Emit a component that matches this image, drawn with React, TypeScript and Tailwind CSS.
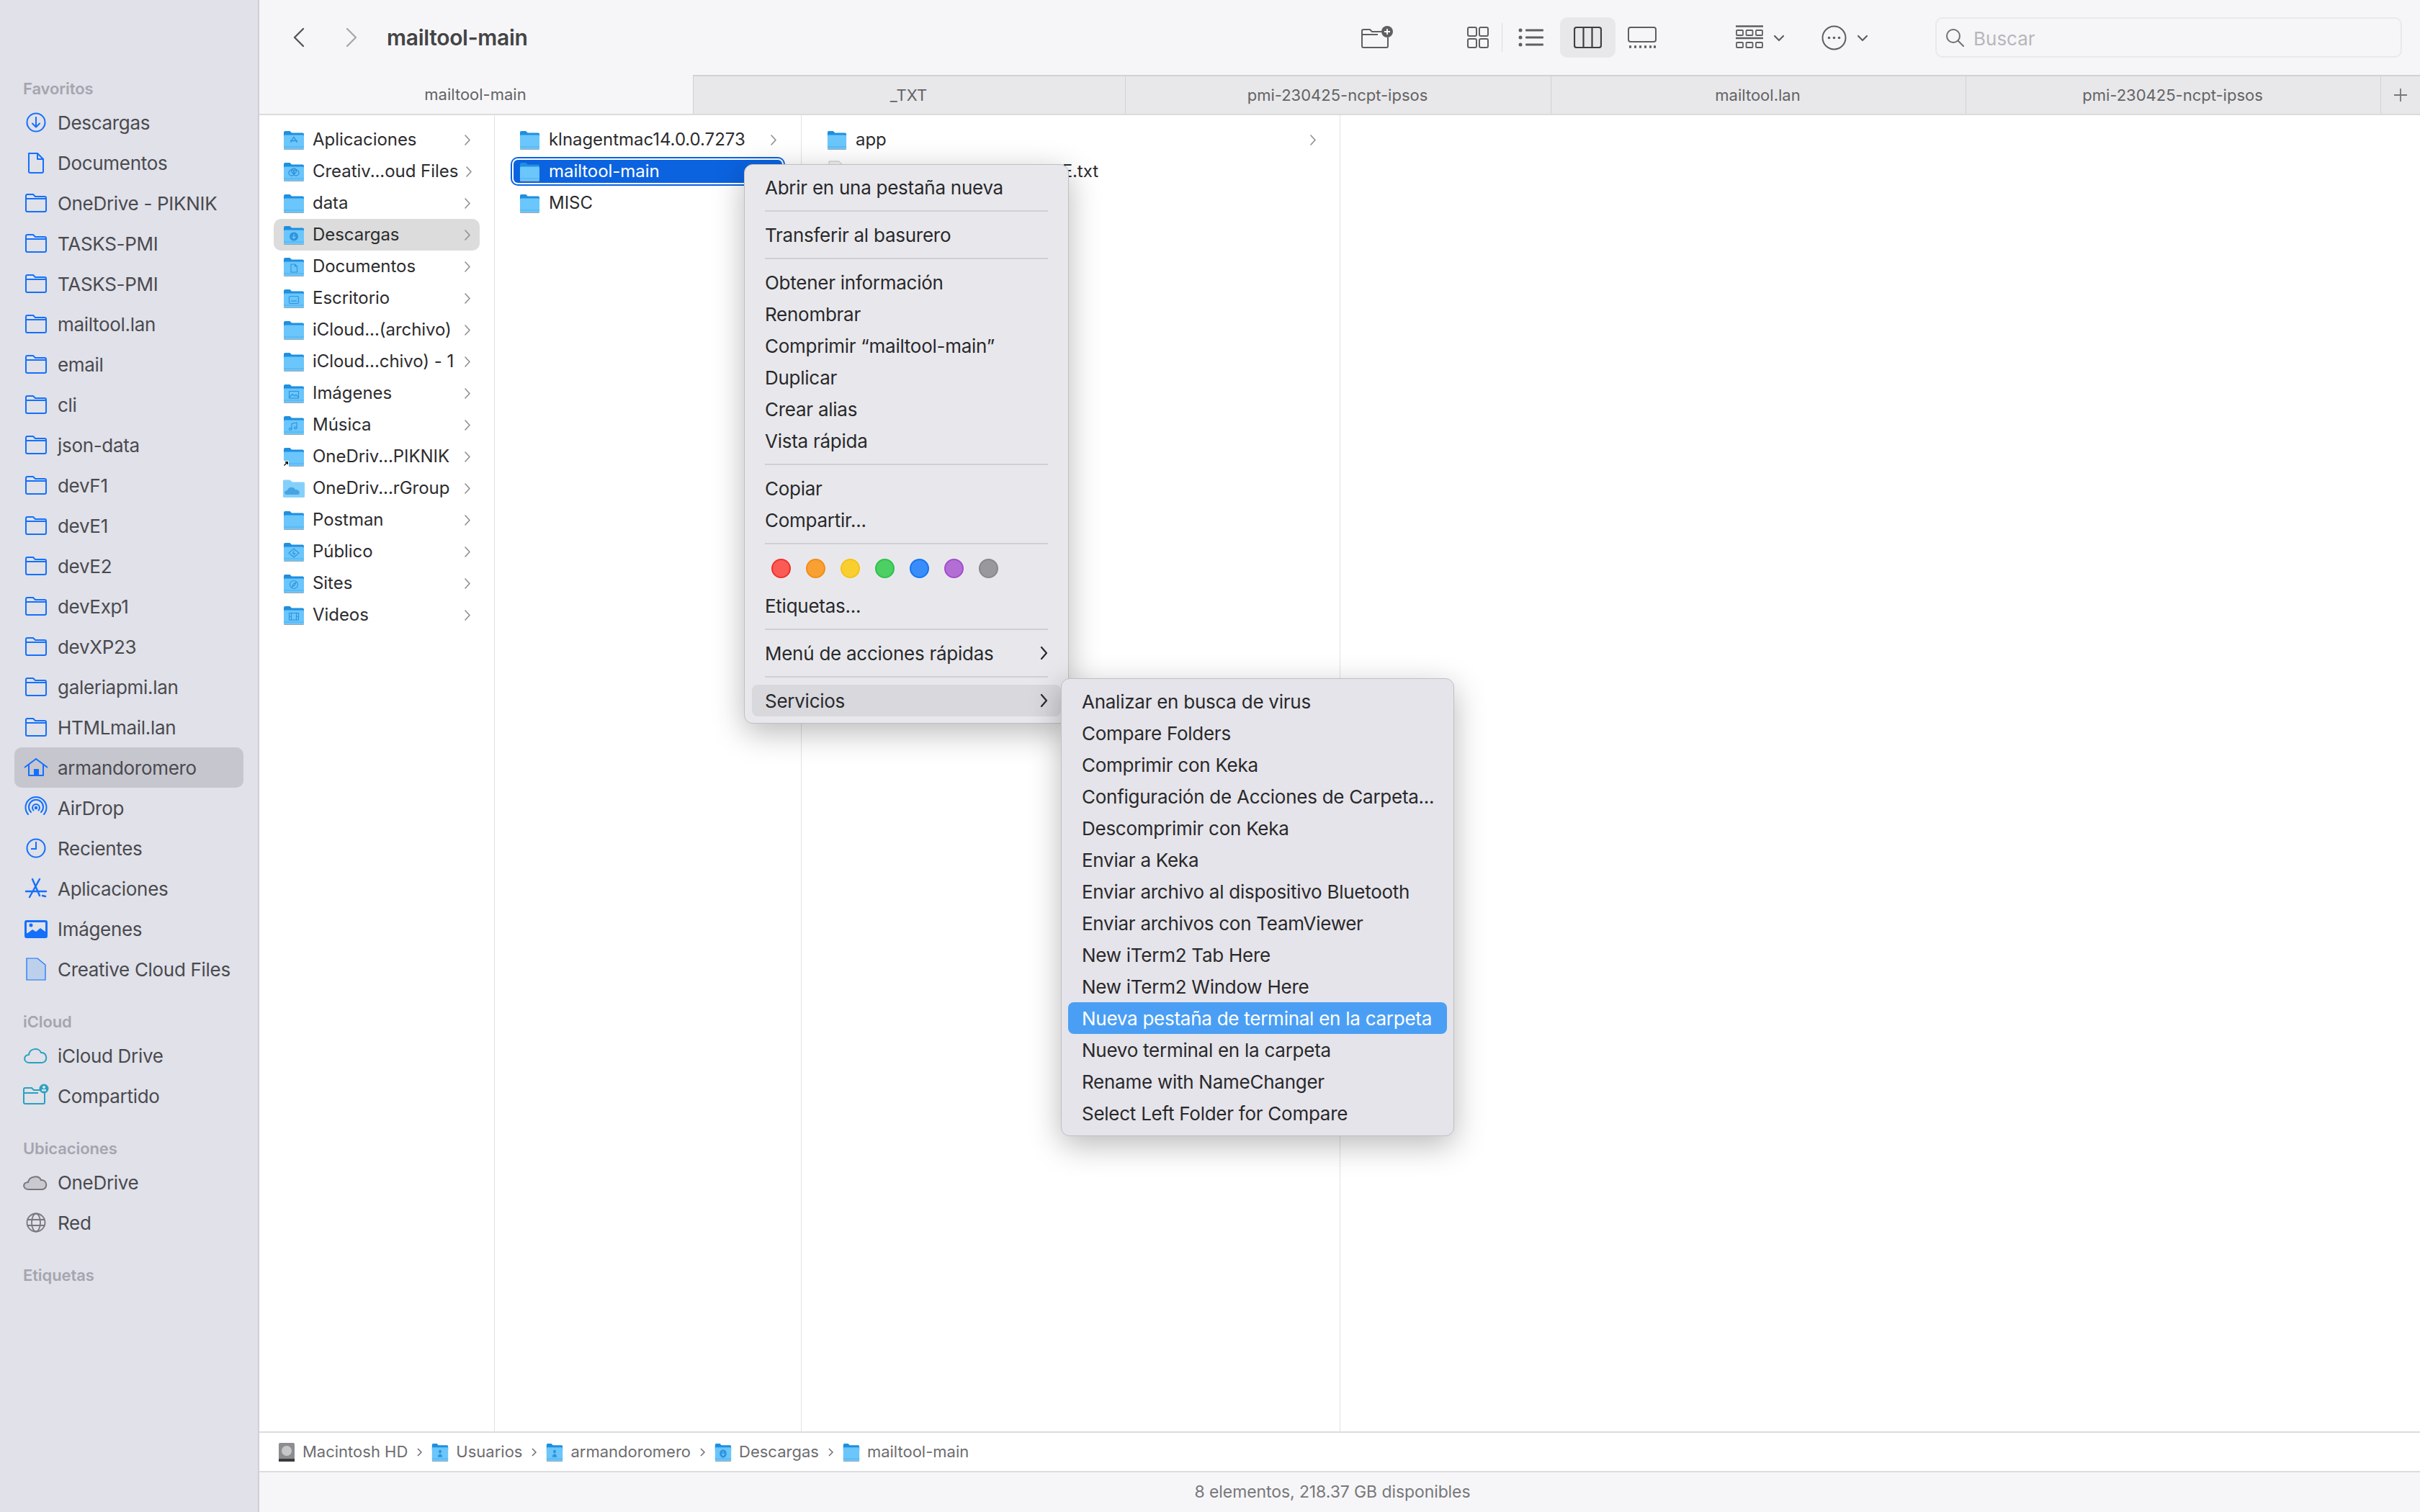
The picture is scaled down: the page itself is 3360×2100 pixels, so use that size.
import type { ReactNode } from 'react';

type Glyph = 'none' | 'apps' | 'cc' | 'down' | 'doc' | 'desk' | 'img' | 'music' | 'public' | 'sites' | 'video' | 'user';

function Chevron({ color = '#8f8f8f' }: { color?: string }) {
  return (
    <svg width="8" height="15" viewBox="0 0 8 15" fill="none" className="shrink-0">
      <path d="M1 1l6 6.5L1 14" stroke={color} strokeWidth="1.6" strokeLinecap="round" strokeLinejoin="round" />
    </svg>
  );
}

function FolderGlyph({ kind }: { kind: Glyph }) {
  const c = '#2f93dc';
  switch (kind) {
    case 'apps':
      return <path d="M15 9l-4.500 8M15 9l4.500 8M10 14.500h10" stroke={c} strokeWidth="1.300" fill="none" />;
    case 'cc':
      return (
        <g stroke={c} strokeWidth="1.300" fill="none">
          <circle cx="12" cy="15" r="4" />
          <circle cx="18" cy="15" r="4" />
          <circle cx="15" cy="12.500" r="3.500" />
        </g>
      );
    case 'down':
      return (
        <g>
          <circle cx="15" cy="15.500" r="6" fill={c} />
          <path d="M15 12v6M12.500 15.700l2.500 2.500 2.500-2.500" stroke="#6cc8fb" strokeWidth="1.300" fill="none" />
        </g>
      );
    case 'doc':
      return <path d="M11 10h5.500l3 3v8h-8.500zM16.500 10v3h3" stroke={c} strokeWidth="1.100" fill="none" />;
    case 'desk':
      return (
        <g stroke={c} strokeWidth="1.200" fill="none">
          <rect x="8.500" y="10.500" width="13" height="10" rx="1.500" />
          <path d="M11 17h8" />
        </g>
      );
    case 'img':
      return (
        <g stroke={c} strokeWidth="1.100" fill="none">
          <rect x="8.500" y="10.500" width="13" height="9.500" />
          <path d="M9 18.500l4-4 3 2.500 2-1.500 3.500 3" />
        </g>
      );
    case 'music':
      return <path d="M12 18.500v-7l7-1.500v7M12 18.500a1.800 1.500 0 1 1-3.500 0 1.800 1.500 0 0 1 3.500 0zM19 17a1.800 1.500 0 1 1-3.500 0 1.800 1.500 0 0 1 3.500 0z" stroke={c} strokeWidth="1.100" fill="none" />;
    case 'public':
      return (
        <g stroke={c} strokeWidth="1.100" fill="none">
          <path d="M15 9l7 6-7 6-7-6z" />
          <path d="M15.500 12l-2 3.500h3l-2 3" />
        </g>
      );
    case 'sites':
      return (
        <g stroke={c} strokeWidth="1.100" fill="none">
          <circle cx="15" cy="15" r="5.500" />
          <path d="M18 12l-2 4-3.500 2 2-4z" />
        </g>
      );
    case 'video':
      return (
        <g stroke={c} strokeWidth="1.100" fill="none">
          <rect x="8.500" y="10.500" width="13" height="9.500" />
          <path d="M11.500 10.500V20M18.500 10.500V20M8.500 15.200h3M18.500 15.200h3" />
        </g>
      );
    case 'user':
      return (
        <g fill={c}>
          <circle cx="15" cy="12.500" r="2.500" />
          <path d="M11 20.500c0-6 8-6 8 0z" />
        </g>
      );
    default:
      return null;
  }
}

function Folder({ glyph = 'none', w = 30, h = 27, alias = false, cloud = false }: { glyph?: Glyph; w?: number; h?: number; alias?: boolean; cloud?: boolean }) {
  if (cloud) {
    return (
      <svg width={w} height={h} viewBox="0 0 30 27" className="shrink-0">
        <path d="M0 3a1.500 1.500 0 0 1 1.500-1.500h8L13 4.500h15.500A1.500 1.500 0 0 1 30 6v18.500a1.500 1.500 0 0 1-1.500 1.500h-27A1.500 1.500 0 0 1 0 24.500z" fill="#85d0fa" />
        <path d="M5 22c-4 0-4-6 1-6 1-5 9-6 11-1 6-1 8 7 3 7z" fill="#46a4e2" />
      </svg>
    );
  }
  return (
    <svg width={w} height={h} viewBox="0 0 30 27" preserveAspectRatio="none" className="shrink-0">
      <path d="M1 3a2 2 0 0 1 2-2h6.500l2.500 2.500h15a2 2 0 0 1 2 2V10H1z" fill="#1f8fdf" />
      <rect x="1" y="25" width="28" height="2" rx="1" fill="#9aa7b2" />
      <rect x="1" y="6.500" width="28" height="19.500" rx="1.500" fill="#6ac6fb" />
      <rect x="1" y="22.500" width="28" height="1" fill="#4fb0ee" />
      <FolderGlyph kind={glyph} />
      {alias && (
        <g>
          <rect x="0" y="19" width="8" height="8" fill="#fff" />
          <path d="M1.500 25.500L6 21M3 20.800h3.300v3.300" stroke="#111" strokeWidth="1.400" fill="none" />
        </g>
      )}
    </svg>
  );
}

const blue = '#1470fb';

const sidebarIcons: Record<string, ReactNode> = {
  down: (
    <g stroke={blue} strokeWidth="2" fill="none">
      <circle cx="18" cy="18" r="12.500" />
      <path d="M18 11v13M13 19.500l5 5 5-5" strokeLinecap="round" strokeLinejoin="round" />
    </g>
  ),
  doc: <path d="M8 5h12l8 8v17a2 2 0 0 1-2 2H10a2 2 0 0 1-2-2zM20 5v8h8" stroke={blue} strokeWidth="2" fill="none" strokeLinejoin="round" />,
  folder: <path d="M4 8a2 2 0 0 1 2-2h8l3 3h13a2 2 0 0 1 2 2v17a2 2 0 0 1-2 2H6a2 2 0 0 1-2-2zM4 12h28" stroke={blue} strokeWidth="2" fill="none" />,
  home: (
    <g>
      <path d="M2 18L18 6l16 12M8 14v15h20V14" stroke={blue} strokeWidth="2" fill="none" strokeLinejoin="round" />
      <rect x="15" y="20" width="7" height="9" fill={blue} />
    </g>
  ),
  air: (
    <g stroke={blue} strokeWidth="2" fill="none" strokeLinecap="round">
      <path d="M7 27a14.500 14.500 0 1 1 22 0" />
      <path d="M11 24a10 10 0 1 1 14 0" />
      <path d="M14.500 21.500a5 5 0 1 1 7 0" />
      <circle cx="18" cy="18" r="1.300" fill={blue} />
    </g>
  ),
  clock: (
    <g stroke={blue} strokeWidth="2" fill="none">
      <circle cx="18" cy="18" r="12.500" />
      <path d="M18 9v10h-7" />
    </g>
  ),
  apps: <path d="M13 5l10 23M23 5L9 30M4 22h28M27 28l4 1" stroke={blue} strokeWidth="2.400" fill="none" strokeLinecap="round" />,
  img: (
    <g>
      <rect x="2" y="6" width="32" height="25" rx="3" fill={blue} />
      <rect x="5" y="9" width="26" height="15" fill="#e0e1e9" />
      <circle cx="11" cy="13" r="2.500" fill={blue} />
      <path d="M5 25l8-6 5 3 6-5 7 5v3H5z" fill={blue} />
    </g>
  ),
  ccf: <path d="M5 3h15l11 9v21H5z" fill="#bcd0ec" stroke={blue} strokeWidth="1.200" />,
  cloud: <path d="M9 28c-9 0-9-11-1-11 1-9 14-11 17-3 9-1 10 14 1 14z" stroke="#2aa1bf" strokeWidth="2" fill="none" />,
  shared: (
    <g>
      <path d="M1 9a2 2 0 0 1 2-2h9l3 3h13a2 2 0 0 1 2 2v15a2 2 0 0 1-2 2H3a2 2 0 0 1-2-2zM1 14h20" stroke="#2aa1bf" strokeWidth="2" fill="none" />
      <circle cx="29" cy="8" r="6.500" fill="#2aa1bf" />
      <circle cx="29" cy="6" r="2" fill="#e0e1e9" />
      <rect x="26" y="9" width="6" height="2.500" fill="#e0e1e9" />
    </g>
  ),
  onedrive: (
    <g>
      <path d="M8 28c-9 0-9-10-1-10 2-9 15-10 18-3 9-1 10 13 1 13z" fill="#c9c9cf" stroke="#77777c" strokeWidth="2" />
    </g>
  ),
  globe: (
    <g stroke="#77777c" strokeWidth="1.800" fill="none">
      <circle cx="18" cy="18" r="12.500" />
      <ellipse cx="18" cy="18" rx="6" ry="12.500" />
      <path d="M6 14h24M6 22h24" />
    </g>
  ),
};

function SidebarRow({ icon, label, active = false }: { icon: string; label: string; active?: boolean }) {
  return (
    <div className={`mx-[20px] flex h-[56px] w-[318px] items-center gap-[12px] rounded-[10px] pl-[12px] ${active ? 'bg-[#c6c6cf]' : ''}`}>
      <svg width="36" height="36" viewBox="0 0 36 36" className="shrink-0">
        {sidebarIcons[icon]}
      </svg>
      <span className="text-[26px] tracking-[-0.012em] text-[#4a4a4e]">{label}</span>
    </div>
  );
}

function SidebarHeading({ label, first = false }: { label: string; first?: boolean }) {
  return <div className={`h-[35px] pl-[32px] text-[22px] leading-[32px] font-semibold tracking-[-0.005em] text-[#a5a5ae] ${first ? '' : 'mt-[29px]'}`}>{label}</div>;
}

const favoritos = [
  ['down', 'Descargas'],
  ['doc', 'Documentos'],
  ['folder', 'OneDrive - PIKNIK'],
  ['folder', 'TASKS-PMI'],
  ['folder', 'TASKS-PMI'],
  ['folder', 'mailtool.lan'],
  ['folder', 'email'],
  ['folder', 'cli'],
  ['folder', 'json-data'],
  ['folder', 'devF1'],
  ['folder', 'devE1'],
  ['folder', 'devE2'],
  ['folder', 'devExp1'],
  ['folder', 'devXP23'],
  ['folder', 'galeriapmi.lan'],
  ['folder', 'HTMLmail.lan'],
  ['home', 'armandoromero'],
  ['air', 'AirDrop'],
  ['clock', 'Recientes'],
  ['apps', 'Aplicaciones'],
  ['img', 'Imágenes'],
  ['ccf', 'Creative Cloud Files'],
];

function Sidebar() {
  return (
    <aside className="flex w-[360px] shrink-0 flex-col border-r-2 border-[#cfcfd6] bg-[#e0e1e9] pt-[107px]">
      <SidebarHeading label="Favoritos" first />
      {favoritos.map(([icon, label], i) => (
        <SidebarRow key={i} icon={icon} label={label} active={label === 'armandoromero'} />
      ))}
      <SidebarHeading label="iCloud" />
      <SidebarRow icon="cloud" label="iCloud Drive" />
      <SidebarRow icon="shared" label="Compartido" />
      <SidebarHeading label="Ubicaciones" />
      <SidebarRow icon="onedrive" label="OneDrive" />
      <SidebarRow icon="globe" label="Red" />
      <SidebarHeading label="Etiquetas" />
    </aside>
  );
}

function Toolbar() {
  const stroke = '#5f5f61';
  return (
    <div className="flex h-[104px] shrink-0 items-center bg-[#f6f6f8]">
      <svg width="16" height="28" viewBox="0 0 16 28" className="ml-[47px]">
        <path d="M14 2L2 14l12 12" stroke="#555" strokeWidth="2.400" fill="none" strokeLinecap="round" strokeLinejoin="round" />
      </svg>
      <svg width="16" height="28" viewBox="0 0 16 28" className="ml-[57px]">
        <path d="M2 2l12 12L2 26" stroke="#a9a9ab" strokeWidth="2.400" fill="none" strokeLinecap="round" strokeLinejoin="round" />
      </svg>
      <span className="ml-[41px] text-[30px] font-semibold tracking-[-0.01em] text-[#444446]">mailtool-main</span>
      <svg width="45" height="32" viewBox="0 0 45 32" className="ml-auto">
        <path d="M1 7a2 2 0 0 1 2-2h9l3 3h15M1 12h22M1 7v21a2 2 0 0 0 2 2h32a2 2 0 0 0 2-2V16" stroke={stroke} strokeWidth="2" fill="none" />
        <circle cx="36" cy="8" r="8" fill={stroke} />
        <path d="M36 4v8M32 8h8" stroke="#fff" strokeWidth="1.800" />
      </svg>
      <svg width="30" height="30" viewBox="0 0 30 30" className="ml-[102px]" stroke={stroke} strokeWidth="2" fill="none">
        <rect x="1" y="1" width="12" height="12" rx="2" />
        <rect x="17" y="1" width="12" height="12" rx="2" />
        <rect x="1" y="17" width="12" height="12" rx="2" />
        <rect x="17" y="17" width="12" height="12" rx="2" />
      </svg>
      <div className="ml-[18px] h-[40px] w-px bg-[#dcdcde]" />
      <svg width="35" height="26" viewBox="0 0 35 26" className="ml-[22px]" fill={stroke}>
        <circle cx="3" cy="3" r="2.500" />
        <rect x="10" y="1.500" width="25" height="3" rx="1" />
        <circle cx="3" cy="13" r="2.500" />
        <rect x="10" y="11.500" width="25" height="3" rx="1" />
        <circle cx="3" cy="23" r="2.500" />
        <rect x="10" y="21.500" width="25" height="3" rx="1" />
      </svg>
      <div className="ml-[23px] flex h-[56px] w-[77px] items-center justify-center rounded-[10px] bg-[#e8e8ea]">
        <svg width="39" height="30" viewBox="0 0 39 30" fill="none" stroke="#3f3f41" strokeWidth="2.200">
          <rect x="1" y="1" width="37" height="28" rx="3" />
          <path d="M13.500 1v28M25.500 1v28" />
        </svg>
      </div>
      <svg width="40" height="30" viewBox="0 0 40 30" className="ml-[17px]" fill="none" stroke={stroke} strokeWidth="2">
        <rect x="1" y="1" width="38" height="20" rx="3" />
        <path d="M2 28h3M9 28h3M16 28h3M23 28h3M30 28h3M36 28h3" strokeWidth="3.500" />
      </svg>
      <svg width="38" height="35" viewBox="0 0 38 35" className="ml-[110px]" fill="none" stroke={stroke} strokeWidth="1.800">
        <path d="M0 1.500h38M0 18h38" strokeWidth="2.400" />
        <rect x="1" y="7" width="9" height="7" rx="1" />
        <rect x="14.500" y="7" width="9" height="7" rx="1" />
        <rect x="28" y="7" width="9" height="7" rx="1" />
        <rect x="1" y="24" width="9" height="7" rx="1" />
        <rect x="14.500" y="24" width="9" height="7" rx="1" />
        <rect x="28" y="24" width="9" height="7" rx="1" />
      </svg>
      <svg width="16" height="10" viewBox="0 0 16 10" className="mt-[2px] ml-[14px]">
        <path d="M2 2l6 6 6-6" stroke={stroke} strokeWidth="2.200" fill="none" strokeLinecap="round" strokeLinejoin="round" />
      </svg>
      <svg width="35" height="35" viewBox="0 0 35 35" className="ml-[51px]" fill="none" stroke={stroke} strokeWidth="2">
        <circle cx="17.500" cy="17.500" r="16" />
        <circle cx="10.500" cy="17.500" r="1.800" fill={stroke} stroke="none" />
        <circle cx="17.500" cy="17.500" r="1.800" fill={stroke} stroke="none" />
        <circle cx="24.500" cy="17.500" r="1.800" fill={stroke} stroke="none" />
      </svg>
      <svg width="16" height="10" viewBox="0 0 16 10" className="mt-[2px] ml-[14px]">
        <path d="M2 2l6 6 6-6" stroke={stroke} strokeWidth="2.200" fill="none" strokeLinecap="round" strokeLinejoin="round" />
      </svg>
      <div className="mr-[25px] ml-[93px] flex h-[56px] w-[648px] items-center gap-[13px] rounded-[10px] border-2 border-[#e9e9eb] pl-[12px]">
        <svg width="26" height="26" viewBox="0 0 26 26" fill="none" stroke="#707072" strokeWidth="2">
          <circle cx="11" cy="11" r="9" />
          <path d="M17.500 17.500L25 25" strokeLinecap="round" />
        </svg>
        <span className="pt-[3px] text-[26px] text-[#b7b7ba]">Buscar</span>
      </div>
    </div>
  );
}

const tabs = [
  { label: 'mailtool-main', width: 'w-[602px]', active: true },
  { label: '_TXT', width: 'w-[600px]', active: false },
  { label: 'pmi-230425-ncpt-ipsos', width: 'w-[591px]', active: false },
  { label: 'mailtool.lan', width: 'w-[576px]', active: false },
  { label: 'pmi-230425-ncpt-ipsos', width: 'w-[576px]', active: false },
];

function TabBar() {
  return (
    <div className="flex h-[56px] shrink-0 border-b-2 border-[#dcdcde] text-[22px] text-[#636365]">
      {tabs.map((t, i) => (
        <div
          key={i}
          className={`flex ${t.width} items-center justify-center pr-[2px] ${t.active ? 'bg-[#f6f6f8]' : 'border-t-2 border-l border-[#d2d2d4] bg-[#e8e8ea]'}`}
        >
          {t.label}
        </div>
      ))}
      <div className="flex flex-1 items-center justify-center border-t-2 border-l border-[#d2d2d4] bg-[#e8e8ea]">
        <svg width="22" height="22" viewBox="0 0 22 22">
          <path d="M11 2v18M2 11h18" stroke="#77777a" strokeWidth="1.800" />
        </svg>
      </div>
    </div>
  );
}

const firstColumn: { label: string; glyph?: Glyph; alias?: boolean; cloud?: boolean; active?: boolean }[] = [
  { label: 'Aplicaciones', glyph: 'apps' },
  { label: 'Creativ...oud Files', glyph: 'cc' },
  { label: 'data' },
  { label: 'Descargas', glyph: 'down', active: true },
  { label: 'Documentos', glyph: 'doc' },
  { label: 'Escritorio', glyph: 'desk' },
  { label: 'iCloud...(archivo)' },
  { label: 'iCloud...chivo) - 1' },
  { label: 'Imágenes', glyph: 'img' },
  { label: 'Música', glyph: 'music' },
  { label: 'OneDriv...PIKNIK', alias: true },
  { label: 'OneDriv...rGroup', cloud: true },
  { label: 'Postman' },
  { label: 'Público', glyph: 'public' },
  { label: 'Sites', glyph: 'sites' },
  { label: 'Videos', glyph: 'video' },
];

const fileText = 'text-[24px] tracking-[-0.002em] whitespace-nowrap';

function Columns() {
  return (
    <div className="flex min-h-0 flex-1 bg-white">
      <div className="w-[327px] shrink-0 border-r border-[#e2e2e2] pt-[12px]">
        {firstColumn.map((r) => (
          <div key={r.label} className={`mx-[20px] flex h-[44px] items-center gap-[11px] rounded-[10px] pr-[13px] pl-[13px] ${r.active ? 'bg-[#dcdcdc]' : ''}`}>
            <Folder glyph={r.glyph} alias={r.alias} cloud={r.cloud} />
            <span className={`flex-1 text-[#2c2c2e] ${fileText}`}>{r.label}</span>
            <Chevron />
          </div>
        ))}
      </div>
      <div className="w-[426px] shrink-0 border-r border-[#e2e2e2] pt-[12px]">
        <div className="mr-[34px] ml-[34px] flex h-[44px] items-center gap-[12px]">
          <Folder w={29} />
          <span className={`flex-1 text-[#2c2c2e] ${fileText}`}>klnagentmac14.0.0.7273</span>
          <Chevron />
        </div>
        <div className="flex h-[44px] items-center">
          <div className="mx-[26px] flex h-[32px] w-[374px] items-center gap-[12px] rounded-[6px] bg-[#0b63e0] pl-[8px] shadow-[0_0_0_2px_#ffffff,0_0_0_4px_#0b63e0]">
            <Folder w={29} />
            <span className={`text-white ${fileText}`}>mailtool-main</span>
          </div>
        </div>
        <div className="mx-[34px] flex h-[44px] items-center gap-[12px]">
          <Folder w={29} />
          <span className={`text-[#2c2c2e] ${fileText}`}>MISC</span>
        </div>
      </div>
      <div className="w-[748px] shrink-0 border-r border-[#e2e2e2] pt-[12px]">
        <div className="ml-[35px] flex h-[44px] items-center gap-[12px] pr-[33px]">
          <Folder w={28} />
          <span className={`flex-1 text-[#2c2c2e] ${fileText}`}>app</span>
          <Chevron />
        </div>
        <div className="ml-[35px] flex h-[44px] items-center gap-[12px]">
          <svg width="28" height="30" viewBox="0 0 28 30" className="shrink-0">
            <path d="M3 1h14l8 8v20H3z" fill="#f2f2f2" stroke="#c4c4c4" />
          </svg>
          <span className={`w-[337px] text-right text-[#2c2c2e] ${fileText}`}>E.txt</span>
        </div>
      </div>
      <div className="flex-1" />
    </div>
  );
}

function Crumb({ label, chevron = true, icon }: { label: string; chevron?: boolean; icon: ReactNode }) {
  return (
    <div className="flex items-center">
      {icon}
      <span className="ml-[10px] text-[22px] text-[#6d6d70]">{label}</span>
      {chevron && (
        <svg width="7" height="12" viewBox="0 0 7 12" className="mx-[13px]">
          <path d="M1 1l5 5-5 5" stroke="#6d6d70" strokeWidth="1.500" fill="none" />
        </svg>
      )}
    </div>
  );
}

function PathBar() {
  return (
    <div className="flex h-[57px] shrink-0 items-center border-y-2 border-[#dcdcde] bg-white pl-[26px]">
      <Crumb
        label="Macintosh HD"
        icon={
          <svg width="24" height="26" viewBox="0 0 24 26">
            <rect x="1" y="0" width="22" height="26" rx="2" fill="#8d8d90" />
            <circle cx="12" cy="11" r="7" fill="#c7c7ca" />
            <rect x="1" y="22" width="22" height="4" fill="#3b3b3d" />
          </svg>
        }
      />
      <Crumb label="Usuarios" icon={<Folder glyph="user" w={24} h={26} />} />
      <Crumb label="armandoromero" icon={<Folder glyph="user" w={24} h={26} />} />
      <Crumb label="Descargas" icon={<Folder glyph="down" w={24} h={26} />} />
      <Crumb label="mailtool-main" chevron={false} icon={<Folder w={24} h={26} />} />
    </div>
  );
}

function MenuItem({ label, submenu = false, hot = false }: { label: string; submenu?: boolean; hot?: boolean }) {
  return (
    <div className={`mx-[10px] flex h-[44px] items-center justify-between rounded-[8px] pr-[18px] pl-[18px] text-[26px] tracking-[-0.01em] whitespace-nowrap text-[#29292b] ${hot ? 'bg-[#d8d8dd]' : ''}`}>
      {label}
      {submenu && (
        <svg width="11" height="20" viewBox="0 0 11 20">
          <path d="M2 2l7 8-7 8" stroke="#29292b" strokeWidth="2.200" fill="none" strokeLinecap="round" strokeLinejoin="round" />
        </svg>
      )}
    </div>
  );
}

function Separator() {
  return (
    <div className="flex h-[22px] items-center px-[28px]">
      <div className="h-[2px] w-full bg-[#cfcfd4]" />
    </div>
  );
}

const tagColors = [
  'bg-[#fb5b54] border-[#f02f2a]',
  'bg-[#f8a032] border-[#f28c14]',
  'bg-[#f9cf30] border-[#f5c30f]',
  'bg-[#4ccf63] border-[#2dc248]',
  'bg-[#3a8df8] border-[#1474f5]',
  'bg-[#b26ed5] border-[#a24dcb]',
  'bg-[#98989d] border-[#88888c]',
];

function ContextMenu() {
  return (
    <div className="absolute top-[228px] left-[1033px] w-[451px] rounded-[12px] border border-[#bfbfc3] bg-[#e8e8ec] py-[9px] shadow-[0_12px_44px_rgba(0,0,0,0.28)]">
      <MenuItem label="Abrir en una pestaña nueva" />
      <Separator />
      <MenuItem label="Transferir al basurero" />
      <Separator />
      <MenuItem label="Obtener información" />
      <MenuItem label="Renombrar" />
      <MenuItem label="Comprimir “mailtool-main”" />
      <MenuItem label="Duplicar" />
      <MenuItem label="Crear alias" />
      <MenuItem label="Vista rápida" />
      <Separator />
      <MenuItem label="Copiar" />
      <MenuItem label="Compartir..." />
      <Separator />
      <div className="flex h-[53px] items-center gap-[21px] pb-[7px] pl-[37px]">
        {tagColors.map((c) => (
          <div key={c} className={`h-[27px] w-[27px] rounded-full border-2 ${c}`} />
        ))}
      </div>
      <MenuItem label="Etiquetas..." />
      <Separator />
      <MenuItem label="Menú de acciones rápidas" submenu />
      <Separator />
      <MenuItem label="Servicios" submenu hot />
    </div>
  );
}

const services = [
  'Analizar en busca de virus',
  'Compare Folders',
  'Comprimir con Keka',
  'Configuración de Acciones de Carpeta...',
  'Descomprimir con Keka',
  'Enviar a Keka',
  'Enviar archivo al dispositivo Bluetooth',
  'Enviar archivos con TeamViewer',
  'New iTerm2 Tab Here',
  'New iTerm2 Window Here',
  'Nueva pestaña de terminal en la carpeta',
  'Nuevo terminal en la carpeta',
  'Rename with NameChanger',
  'Select Left Folder for Compare',
];

function ServicesMenu() {
  return (
    <div className="absolute top-[942px] left-[1473px] w-[546px] rounded-[12px] border border-[#bfbfc3] bg-[#e5e4ea] py-[9px] shadow-[0_12px_44px_rgba(0,0,0,0.28)]">
      {services.map((s) => (
        <div
          key={s}
          className={`mx-[9px] flex h-[44px] items-center rounded-[8px] pl-[19px] text-[26px] tracking-[-0.01em] whitespace-nowrap ${s.startsWith('Nueva') ? 'bg-[#4a9ff5] text-white' : 'text-[#29292b]'}`}
        >
          {s}
        </div>
      ))}
    </div>
  );
}

export default function App() {
  return (
    <div className="relative flex h-[2100px] w-[3360px] overflow-hidden bg-white font-[family-name:Inter,sans-serif]">
      <Sidebar />
      <main className="flex min-w-0 flex-1 flex-col">
        <Toolbar />
        <TabBar />
        <Columns />
        <PathBar />
        <div className="flex h-[55px] shrink-0 items-center justify-center bg-[#f6f6f8] pr-[20px] text-[23px] tracking-[-0.004em] text-[#77777a]">
          8 elementos, 218.37 GB disponibles
        </div>
      </main>
      <ContextMenu />
      <ServicesMenu />
    </div>
  );
}
